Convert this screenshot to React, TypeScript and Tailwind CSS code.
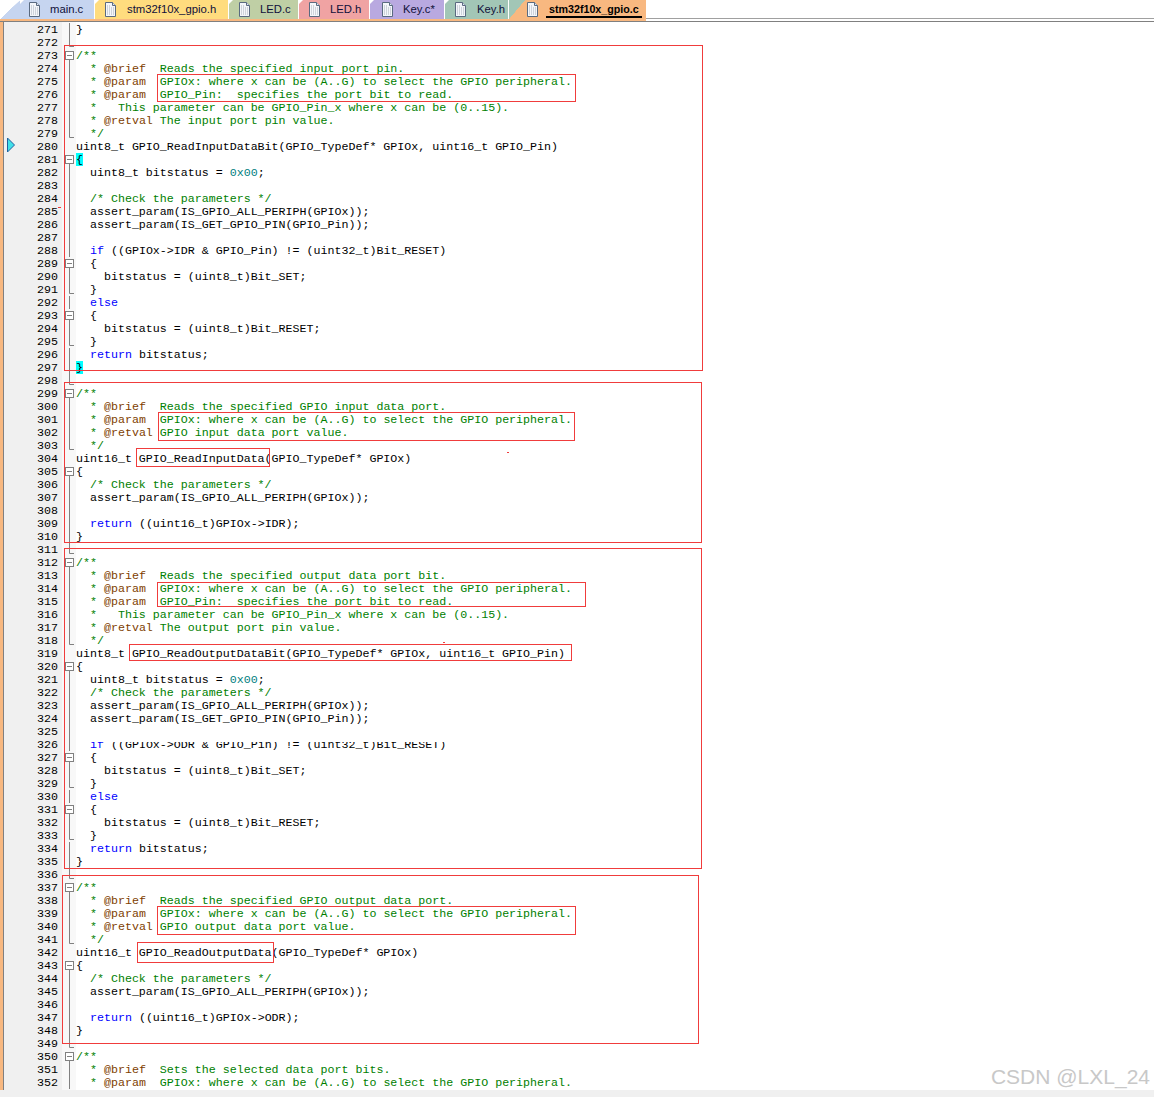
import React from 'react'

const code = `}

/**
  * @brief  Reads the specified input port pin.
  * @param  GPIOx: where x can be (A..G) to select the GPIO peripheral.
  * @param  GPIO_Pin:  specifies the port bit to read.
  *   This parameter can be GPIO_Pin_x where x can be (0..15).
  * @retval The input port pin value.
  */
uint8_t GPIO_ReadInputDataBit(GPIO_TypeDef* GPIOx, uint16_t GPIO_Pin)
{
  uint8_t bitstatus = 0x00;

  /* Check the parameters */
  assert_param(IS_GPIO_ALL_PERIPH(GPIOx));
  assert_param(IS_GET_GPIO_PIN(GPIO_Pin));

  if ((GPIOx->IDR & GPIO_Pin) != (uint32_t)Bit_RESET)
  {
    bitstatus = (uint8_t)Bit_SET;
  }
  else
  {
    bitstatus = (uint8_t)Bit_RESET;
  }
  return bitstatus;
}

/**
  * @brief  Reads the specified GPIO input data port.
  * @param  GPIOx: where x can be (A..G) to select the GPIO peripheral.
  * @retval GPIO input data port value.
  */
uint16_t GPIO_ReadInputData(GPIO_TypeDef* GPIOx)
{
  /* Check the parameters */
  assert_param(IS_GPIO_ALL_PERIPH(GPIOx));

  return ((uint16_t)GPIOx->IDR);
}

/**
  * @brief  Reads the specified output data port bit.
  * @param  GPIOx: where x can be (A..G) to select the GPIO peripheral.
  * @param  GPIO_Pin:  specifies the port bit to read.
  *   This parameter can be GPIO_Pin_x where x can be (0..15).
  * @retval The output port pin value.
  */
uint8_t GPIO_ReadOutputDataBit(GPIO_TypeDef* GPIOx, uint16_t GPIO_Pin)
{
  uint8_t bitstatus = 0x00;
  /* Check the parameters */
  assert_param(IS_GPIO_ALL_PERIPH(GPIOx));
  assert_param(IS_GET_GPIO_PIN(GPIO_Pin));

  if ((GPIOx->ODR & GPIO_Pin) != (uint32_t)Bit_RESET)
  {
    bitstatus = (uint8_t)Bit_SET;
  }
  else
  {
    bitstatus = (uint8_t)Bit_RESET;
  }
  return bitstatus;
}

/**
  * @brief  Reads the specified GPIO output data port.
  * @param  GPIOx: where x can be (A..G) to select the GPIO peripheral.
  * @retval GPIO output data port value.
  */
uint16_t GPIO_ReadOutputData(GPIO_TypeDef* GPIOx)
{
  /* Check the parameters */
  assert_param(IS_GPIO_ALL_PERIPH(GPIOx));

  return ((uint16_t)GPIOx->ODR);
}

/**
  * @brief  Sets the selected data port bits.
  * @param  GPIOx: where x can be (A..G) to select the GPIO peripheral.`.split('\n')

const FIRST_LINE = 271

// fold margin, by line number: boxes and corners; anything else inside a range is a plain bar
const foldBoxes = [273, 281, 289, 293, 299, 305, 312, 320, 327, 331, 337, 343, 350]
const foldEnds = [272, 279, 291, 295, 298, 303, 311, 318, 329, 333, 336, 341, 349]
const foldNone = [280, 304, 319, 342]

const tabs = [
  { name: 'main.c', w: 'w-[75px]', bg: 'bg-[#c6d5f0]', left: 'pl-[8px]', gap: 'gap-[9px]' },
  { name: 'stm32f10x_gpio.h', w: 'w-[134px]', bg: 'bg-[#ffdc7e]', left: 'pl-[9px]', gap: 'gap-[10px]' },
  { name: 'LED.c', w: 'w-[70px]', bg: 'bg-[#bfcfa5]', left: 'pl-[9px]', gap: 'gap-[9px]' },
  { name: 'LED.h', w: 'w-[71px]', bg: 'bg-[#f0a3a3]', left: 'pl-[9px]', gap: 'gap-[9px]' },
  { name: 'Key.c*', w: 'w-[75px]', bg: 'bg-[#b9a9e0]', left: 'pl-[11px]', gap: 'gap-[9px]' },
  { name: 'Key.h', w: 'w-[64px]', bg: 'bg-[#a2c6b6]', left: 'pl-[9px]', gap: 'gap-[10px]' },
]

function PageIcon() {
  return (
    <svg width="13" height="15" viewBox="0 0 13 15" className="shrink-0">
      <path d="M1.5 .5H8.5L11.5 3.5V14.5H1.5Z" fill="#f4f6fa" stroke="#5a6a80" />
      <path d="M8.5 .5V3.5H11.5" fill="#dfe6f2" stroke="#5a6a80" />
      <path d="M3 4h1M5 4h1M3 6h1M5 6h1M7 6h1M9 6h1M3 8h1M5 8h1M7 8h1M9 8h1M3 10h1M5 10h1M7 10h1M9 10h1M3 12h1M5 12h1M7 12h1M9 12h1" stroke="#a8b0bc" />
    </svg>
  )
}

function FoldMark({ line }: { line: number }) {
  if (foldNone.includes(line)) return null
  const stroke = '#808080'
  if (foldBoxes.includes(line)) {
    return (
      <svg width="14" height="13" className="block">
        <rect x="3.5" y="2.5" width="8" height="8" fill="#fff" stroke={stroke} />
        <path d="M5 6.5h5" stroke={stroke} />
        <path d="M7.5 10.5V13" stroke={stroke} />
      </svg>
    )
  }
  if (foldEnds.includes(line)) {
    return (
      <svg width="14" height="13" className="block">
        <path d="M7.5 0V10.5H12" fill="none" stroke={stroke} />
      </svg>
    )
  }
  return (
    <svg width="14" height="13" className="block">
      <path d="M7.5 0V13" stroke={stroke} />
    </svg>
  )
}

function CodeText({ text, line }: { text: string; line: number }) {
  const trimmed = text.trim()
  if (line === 281 || line === 297) {
    return <span className="bg-[#00ffff] text-black">{text}</span>
  }
  const isComment = trimmed.startsWith('/*') || trimmed.startsWith('*')
  if (isComment) {
    const tag = text.match(/^(\s*\* )(@\w+)(.*)$/)
    if (tag) {
      return (
        <span className="text-[#008000]">
          {tag[1]}
          <span className="text-[#804000]">{tag[2]}</span>
          {tag[3]}
        </span>
      )
    }
    return <span className="text-[#008000]">{text}</span>
  }
  const parts = text.split(/(\bif\b|\belse\b|\breturn\b|0x00)/)
  return (
    <>
      {parts.map((p, i) =>
        p === '0x00' ? (
          <span key={i} className="text-[#008080]">{p}</span>
        ) : p === 'if' || p === 'else' || p === 'return' ? (
          <span key={i} className="text-[#0000ff]">{p}</span>
        ) : (
          <span key={i}>{p}</span>
        )
      )}
    </>
  )
}

function Row({ text, line }: { text: string; line: number }) {
  return (
    <div className="flex h-[13px]">
      <div className="w-[54px] shrink-0 bg-[#f0f0f0] text-right text-black">{line}</div>
      <div className="w-[4px] shrink-0 bg-[#f0f0f0]" />
      <div className="w-[14px] shrink-0 bg-[#f8f8f8]">
        <FoldMark line={line} />
      </div>
      <div className="relative whitespace-pre text-black">
        <CodeText text={text} line={line} />
        {line === 326 && <div className="absolute left-0 right-0 top-0 h-[4px] bg-white" />}
      </div>
    </div>
  )
}

// the red annotation rectangles drawn on top of the editor
const boxes = [
  'left-[64px] top-[45px] w-[639px] h-[326px]',
  'left-[157px] top-[74px] w-[419px] h-[28px]',
  'left-[64px] top-[382px] w-[638px] h-[161px]',
  'left-[158px] top-[412px] w-[417px] h-[29px]',
  'left-[136px] top-[448px] w-[134px] h-[19px]',
  'left-[64px] top-[548px] w-[638px] h-[321px]',
  'left-[157px] top-[582px] w-[429px] h-[25px]',
  'left-[129px] top-[644px] w-[443px] h-[17px]',
  'left-[62px] top-[875px] w-[637px] h-[169px]',
  'left-[157px] top-[906px] w-[419px] h-[29px]',
  'left-[137px] top-[942px] w-[137px] h-[21px]',
]

export default function App() {
  return (
    <div className="relative h-[1097px] w-[1154px] overflow-hidden bg-white">
      {/* tab strip */}
      <div className="flex h-[19px] items-stretch bg-white font-['Liberation_Sans',sans-serif] text-[11.3px] text-[#10103a]">
        <div className="w-[20px] shrink-0 bg-[linear-gradient(to_bottom_right,#ffffff_50%,#c6d5f0_51%)]" />
        {tabs.map((t) => (
          <div
            key={t.name}
            className={`flex shrink-0 items-center border-r border-white [clip-path:polygon(4px_0,100%_0,100%_100%,0_100%,0_4px)] ${t.w} ${t.bg} ${t.left} ${t.gap}`}
          >
            <PageIcon />
            <span>{t.name}</span>
          </div>
        ))}
        <div className="w-[16px] shrink-0 bg-[linear-gradient(to_bottom_right,#a2c6b6_50%,#f8b880_51%)]" />
        <div className="flex w-[121px] shrink-0 items-center gap-[7px] bg-[#f8b880] pl-[1px] text-[10.7px] text-black">
          <PageIcon />
          <span className="border-b-2 border-black px-[3px] font-bold leading-[14px]">stm32f10x_gpio.c</span>
        </div>
        <div className="flex-1 border-b border-[#a0a0a0] bg-white" />
      </div>
      <div className="h-[2px] w-[646px] bg-[#f8b880]" />
      <div className="h-[1px] bg-[#808080]" />

      {/* editor */}
      <div className="flex h-[1068px]">
        <div className="w-[3px] shrink-0 bg-[#f8b880]" />
        <div className="w-[1px] shrink-0 bg-[#808080]" />
        <div className="flex-1 overflow-hidden bg-[linear-gradient(to_right,#f0f0f0_58px,#f8f8f8_58px,#f8f8f8_72px,#ffffff_72px)] pt-[1px] font-['Liberation_Mono',monospace] text-[11.65px] leading-[13px]">
          {code.map((text, i) => (
            <Row key={i} text={text} line={FIRST_LINE + i} />
          ))}
        </div>
      </div>
      <div className="h-[7px] bg-[#f0f0f0]" />

      {/* bookmark arrow */}
      <svg width="10" height="16" className="absolute left-[6px] top-[137px]">
        <path d="M1.5 1L8.5 8L1.5 15Z" fill="#40e0e8" stroke="#2060a0" />
      </svg>

      {boxes.map((b) => (
        <div key={b} className={`pointer-events-none absolute border border-[#f03c3c] ${b}`} />
      ))}
      <div className="absolute left-[58px] top-[207px] h-[1px] w-[3px] bg-[#f03c3c]" />
      <div className="absolute left-[507px] top-[452px] h-[1px] w-[2px] bg-[#f03c3c]" />
      <div className="absolute left-[443px] top-[642px] h-[1px] w-[2px] bg-[#f03c3c]" />

      {/* watermark */}
      <div className="absolute right-[4px] top-[1063px] font-['Liberation_Sans',sans-serif] text-[21px] leading-[28px] text-[#c8c8c8]">
        CSDN @LXL_24
      </div>
    </div>
  )
}
